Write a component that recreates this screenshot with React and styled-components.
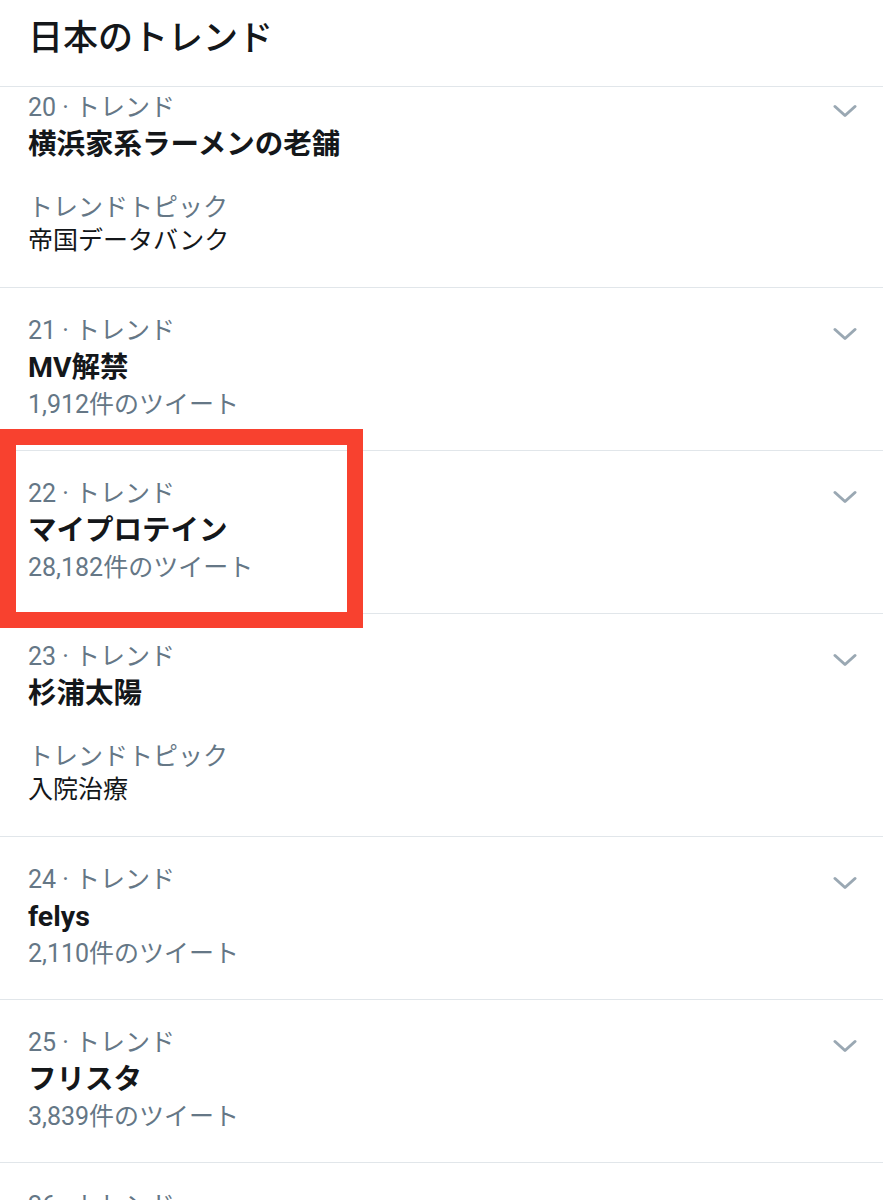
import React from "react";
import styled, { createGlobalStyle } from "styled-components";

const Global = createGlobalStyle`
  html, body { margin: 0; padding: 0; background: #fff; }
  body {
    font-family: Roboto, "Noto Sans CJK JP", "Noto Sans", sans-serif;
    color: #14171a;
    overflow: hidden;
  }
`;

const Page = styled.div`
  position: relative;
  width: 883px;
  height: 1200px;
  overflow: hidden;
  background: #fff;
`;

const Header = styled.header`
  height: 87px;
  display: flex;
  align-items: center;
  padding: 0 28px;
  border-bottom: 1px solid #e1e6ea;
  box-sizing: border-box;
  position: relative;
  z-index: 1;
  background: #fff;
`;

const HeaderTitle = styled.h1`
  margin: 0;
  margin-top: -17px;
  font-size: 35px;
  font-weight: 500;
  letter-spacing: 0;
`;

const Viewport = styled.div`
  overflow: hidden;
`;

const List = styled.ul`
  list-style: none;
  margin: -22px 0 0;
  padding: 0;
`;

const Row = styled.li`
  display: flex;
  align-items: flex-start;
  padding: 27px 26px 29px 28px;
  border-bottom: 1px solid #e1e6ea;
`;

const Body = styled.div`
  flex: 1;
  display: flex;
  flex-direction: column;
`;

const Meta = styled.div`
  font-size: 25px;
  line-height: 32px;
  color: #657786;
`;

const Title = styled.div`
  font-size: 28.5px;
  line-height: 42px;
  font-weight: 700;
  color: #14171a;
`;

const Count = styled.div`
  font-size: 25px;
  line-height: 32px;
  color: #657786;
`;

const Topic = styled.div`
  margin-top: 26px;
  display: flex;
  flex-direction: column;
`;

const TopicLabel = styled.div`
  font-size: 25px;
  line-height: 32px;
  color: #657786;
`;

const TopicText = styled.div`
  font-size: 25px;
  line-height: 34px;
  color: #14171a;
`;

const Caret = styled.button`
  border: 0;
  background: none;
  padding: 0;
  margin-top: 12px;
  width: 24px;
  height: 14px;
  display: flex;
  cursor: pointer;
`;

const Highlight = styled.div`
  position: absolute;
  left: 0;
  top: 429px;
  width: 363px;
  height: 199px;
  box-sizing: border-box;
  border: 16px solid #f8412f;
  pointer-events: none;
  z-index: 2;
`;

const Chevron = () => (
  <svg width="24" height="14" viewBox="0 0 24 14" aria-hidden="true">
    <path
      d="M2 2.5 L12 11.5 L22 2.5"
      fill="none"
      stroke="#9aa8b3"
      strokeWidth="3"
      strokeLinecap="round"
      strokeLinejoin="round"
    />
  </svg>
);

const trends = [
  { rank: 20, title: "横浜家系ラーメンの老舗", topic: "帝国データバンク" },
  { rank: 21, title: "MV解禁", count: "1,912件のツイート" },
  { rank: 22, title: "マイプロテイン", count: "28,182件のツイート" },
  { rank: 23, title: "杉浦太陽", topic: "入院治療" },
  { rank: 24, title: "felys", count: "2,110件のツイート" },
  { rank: 25, title: "フリスタ", count: "3,839件のツイート" },
  { rank: 26, title: "", count: "" },
];

export default function App() {
  return (
    <Page>
      <Global />
      <Header>
        <HeaderTitle>日本のトレンド</HeaderTitle>
      </Header>
      <Viewport>
        <List>
          {trends.map((t) => (
            <Row key={t.rank}>
              <Body>
                <Meta>{t.rank} · トレンド</Meta>
                <Title>{t.title}</Title>
                {t.count && <Count>{t.count}</Count>}
                {t.topic && (
                  <Topic>
                    <TopicLabel>トレンドトピック</TopicLabel>
                    <TopicText>{t.topic}</TopicText>
                  </Topic>
                )}
              </Body>
              <Caret aria-label="more">
                <Chevron />
              </Caret>
            </Row>
          ))}
        </List>
      </Viewport>
      <Highlight />
    </Page>
  );
}
